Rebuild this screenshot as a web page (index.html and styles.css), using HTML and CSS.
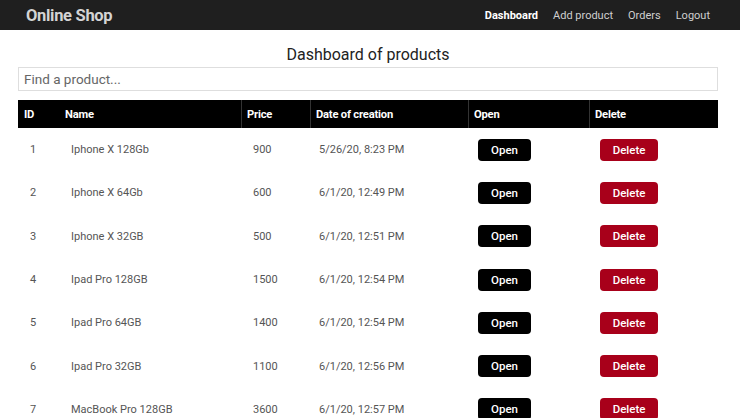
FILE: index.html
```html
<!DOCTYPE html>
<html>
<head>
<meta charset="utf-8">
<link rel="stylesheet" href="styles.css">
</head>
<body>
<nav class="navbar">
  <a class="brand">Online Shop</a>
  <div class="links">
    <a class="link active">Dashboard</a>
    <a class="link">Add product</a>
    <a class="link">Orders</a>
    <a class="link">Logout</a>
  </div>
</nav>
<main class="content">
  <h1 class="title">Dashboard of products</h1>
  <input class="search" type="text" placeholder="Find a product...">
  <table class="products">
    <colgroup>
      <col class="c-id"><col class="c-name"><col class="c-price"><col class="c-date"><col class="c-open"><col class="c-del">
    </colgroup>
    <thead>
      <tr><th>ID</th><th>Name</th><th class="sep">Price</th><th class="sep">Date of creation</th><th class="sep">Open</th><th class="sep">Delete</th></tr>
    </thead>
    <tbody>
      <tr><td>1</td><td>Iphone X 128Gb</td><td>900</td><td>5/26/20, 8:23 PM</td><td><button class="btn open">Open</button></td><td><button class="btn del">Delete</button></td></tr>
      <tr><td>2</td><td>Iphone X 64Gb</td><td>600</td><td>6/1/20, 12:49 PM</td><td><button class="btn open">Open</button></td><td><button class="btn del">Delete</button></td></tr>
      <tr><td>3</td><td>Iphone X 32GB</td><td>500</td><td>6/1/20, 12:51 PM</td><td><button class="btn open">Open</button></td><td><button class="btn del">Delete</button></td></tr>
      <tr><td>4</td><td>Ipad Pro 128GB</td><td>1500</td><td>6/1/20, 12:54 PM</td><td><button class="btn open">Open</button></td><td><button class="btn del">Delete</button></td></tr>
      <tr><td>5</td><td>Ipad Pro 64GB</td><td>1400</td><td>6/1/20, 12:54 PM</td><td><button class="btn open">Open</button></td><td><button class="btn del">Delete</button></td></tr>
      <tr><td>6</td><td>Ipad Pro 32GB</td><td>1100</td><td>6/1/20, 12:56 PM</td><td><button class="btn open">Open</button></td><td><button class="btn del">Delete</button></td></tr>
      <tr><td>7</td><td>MacBook Pro 128GB</td><td>3600</td><td>6/1/20, 12:57 PM</td><td><button class="btn open">Open</button></td><td><button class="btn del">Delete</button></td></tr>
    </tbody>
  </table>
</main>
</body>
</html>
```

FILE: styles.css
```css
* { box-sizing: border-box; }
html, body { margin: 0; padding: 0; }
body {
  font-family: Roboto, "Liberation Sans", sans-serif;
  background: #fff;
  color: #222;
}
.navbar {
  height: 30px;
  background: #1f1f1f;
  display: flex;
  align-items: center;
  justify-content: space-between;
  padding: 0 30px 0 26px;
}
.brand {
  color: #d4d4d4;
  font-size: 16.5px;
  font-weight: 700;
  letter-spacing: -0.3px;
}
.links {
  display: flex;
  gap: 15px;
}
.link {
  color: #cfcfcf;
  font-size: 11px;
}
.link.active {
  color: #fff;
  font-weight: 700;
}
.content {
  padding: 0 22px 0 18px;
}
.title {
  margin: 0;
  padding-top: 15px;
  height: 37px;
  font-size: 16px;
  font-weight: 400;
  text-align: center;
  color: #222;
  line-height: 20px;
}
.search {
  display: block;
  width: 700px;
  height: 24px;
  margin: 0;
  border: 1px solid #dedede;
  border-radius: 0;
  padding: 0 5px;
  font-family: Roboto, "Liberation Sans", sans-serif;
  font-size: 13.5px;
  color: #555;
  outline: none;
}
.search::placeholder { color: #666; }
.products {
  margin-top: 9px;
  width: 700px;
  border-collapse: separate;
  border-spacing: 0;
  table-layout: fixed;
}
.c-id { width: 41px; }
.c-name { width: 182px; }
.c-price { width: 69px; }
.c-date { width: 158px; }
.c-open { width: 121px; }
.c-del { width: 129px; }
.products th {
  background: #000;
  color: #fff;
  font-size: 11.2px;
  font-weight: 700;
  text-align: left;
  height: 28px;
  padding: 1px 5px 0 6px;
  border: none;
  letter-spacing: -0.2px;
}
.products th.sep {
  border-left: 1px solid #333;
  padding-left: 5px;
}
.products td {
  height: 43.3px;
  padding: 0 0 0 11px;
  font-size: 11px;
  color: #555;
  vertical-align: middle;
}
.products td:first-child { padding-left: 12px; }
.products td:nth-child(2) { padding-left: 12px; }
.products td:nth-child(3) { padding-left: 12px; }
.products td:nth-child(4) { padding-left: 9px; }
.products td:nth-child(5) { padding-left: 10px; }
.btn {
  height: 22px;
  border: none;
  border-radius: 4px;
  color: #fff;
  font-family: Roboto, "Liberation Sans", sans-serif;
  font-size: 11.5px;
  font-weight: 500;
  padding: 0;
  display: block;
}
.btn.open { background: #000; width: 53px; }
.btn.del { background: #a8001a; width: 58px; }
```
